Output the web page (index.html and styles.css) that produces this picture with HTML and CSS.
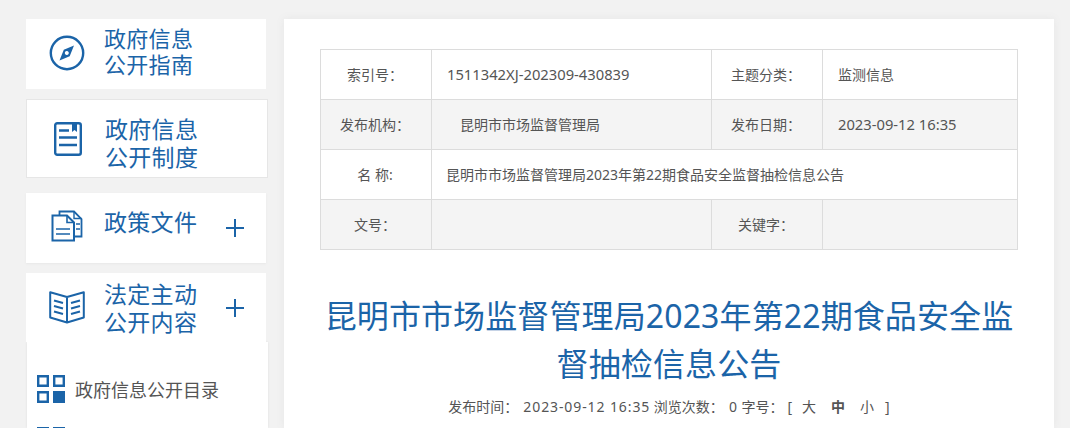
FILE: index.html
```html
<!DOCTYPE html>
<html lang="zh-CN">
<head>
<meta charset="utf-8">
<title>昆明市市场监督管理局2023年第22期食品安全监督抽检信息公告</title>
<link rel="stylesheet" href="styles.css">
</head>
<body>
<div class="page">
  <aside class="side">
    <a class="nav nav-guide">
      <svg class="ic" width="36" height="36" viewBox="0 0 36 36"><circle cx="18" cy="18" r="16.2" fill="none" stroke="#1b64a8" stroke-width="2.4"/><path fill-rule="evenodd" d="M10.500 25.500 14.800 14.800 25 10.500 20.700 21.200ZM17.800 16a2 2 0 1 0 .01 0Z" fill="#1b64a8"/></svg>
      <span class="nav-text">政府信息<br>公开指南</span>
    </a>
    <a class="nav nav-system">
      <svg class="ic" width="28" height="34" viewBox="0 0 28 34"><rect x="1.200" y="1.200" width="25.600" height="31.600" rx="2" fill="none" stroke="#1b64a8" stroke-width="2.400"/><path d="M18 1h5v9l-2.500-2-2.500 2z" fill="#1b64a8"/><path d="M5 8.500h10M5 15.500h18M5 23h18" stroke="#1b64a8" stroke-width="2.400" fill="none"/></svg>
      <span class="nav-text">政府信息<br>公开制度</span>
    </a>
    <a class="nav nav-policy">
      <svg class="ic" width="32" height="32" viewBox="0 0 32 32"><path d="M1.500 5.500H16L23 12.500V30.500H1.500Z" fill="none" stroke="#1b64a8" stroke-width="2"/><path d="M16 5.500V12.500H23" fill="none" stroke="#1b64a8" stroke-width="1.600"/><path d="M8.500 5V1.500H23L30.500 9V26.500H23" fill="none" stroke="#1b64a8" stroke-width="1.800"/><path d="M23 1.500V8.500H30.500" fill="none" stroke="#1b64a8" stroke-width="1.400"/><path d="M5 19h14M5 24h14M25 14h4M25 19h4" stroke="#1b64a8" stroke-width="1.700"/></svg>
      <span class="nav-text">政策文件</span>
      <span class="plus"></span>
    </a>
    <a class="nav nav-law">
      <svg class="ic" width="36" height="33" viewBox="0 0 36 33"><path d="M18 6 1.200 1.300V26.500L18 31.500 34.800 26.500V1.300zM18 6v25" fill="none" stroke="#1b64a8" stroke-width="2" stroke-linejoin="round"/><path d="M5 9.500l9 2.500M5 15l9 2.500M5 20.500l9 2.500M31 9.500l-9 2.500M31 15l-9 2.500M31 20.500l-9 2.500" stroke="#1b64a8" stroke-width="2"/></svg>
      <span class="nav-text">法定主动<br>公开内容</span>
      <span class="plus"></span>
    </a>
    <div class="sub">
      <div class="sub-item">
        <svg width="28" height="28" viewBox="0 0 28 28"><path d="M1.200 1.200h9.600v9.600H1.200zM17.200 1.200h9.600v9.600h-9.600zM1.200 17.200h9.600v9.600H1.200z" fill="none" stroke="#1b64a8" stroke-width="2.400"/><path d="M16 16h12v12H16z" fill="#1b64a8"/></svg>
        <span>政府信息公开目录</span>
      </div>
      <div class="sub-item">
        <svg width="28" height="28" viewBox="0 0 28 28"><path d="M1.200 1.200h9.600v9.600H1.200zM17.200 1.200h9.600v9.600h-9.600z" fill="none" stroke="#1b64a8" stroke-width="2.400"/></svg>
      </div>
    </div>
  </aside>
  <main class="card">
    <table class="meta">
      <colgroup><col class="c1"><col class="c2"><col class="c3"><col class="c4"></colgroup>
      <tr><th>索引号&#xFF1A;</th><td class="num">1511342XJ-202309-430839</td><th>主题分类&#xFF1A;</th><td>监测信息</td></tr>
      <tr class="alt"><th>发布机构&#xFF1A;</th><td class="indent">昆明市市场监督管理局</td><th>发布日期&#xFF1A;</th><td class="num">2023-09-12 16:35</td></tr>
      <tr><th>名 称:</th><td class="cn" colspan="3">昆明市市场监督管理局2023年第22期食品安全监督抽检信息公告</td></tr>
      <tr class="alt"><th>文号&#xFF1A;</th><td></td><th>关键字&#xFF1A;</th><td></td></tr>
    </table>
    <h1 class="title">昆明市市场监督管理局2023年第22期食品安全监督抽检信息公告</h1>
    <p class="info">发布时间&#xFF1A;<span class="digits">2023-09-12 16:35</span> 浏览次数&#xFF1A;<span class="digits">0</span> 字号&#xFF1A;<span class="br">[</span><span class="sz">大</span><b class="sz">中</b><span class="sz">小</span><span class="br-end">]</span></p>
  </main>
</div>
</body>
</html>
```

FILE: styles.css
```css
* { box-sizing: border-box; }
html, body { margin: 0; height: 428px; overflow: hidden; }
body { background: #f2f2f2; font-family: "Noto Sans", "Noto Sans CJK SC", sans-serif; color: #555; }
.page { display: flex; align-items: flex-start; padding: 19px 0 0 26px; gap: 18px; height: 428px; overflow: hidden; }
.side { width: 240px; flex: none; display: flex; flex-direction: column; }
.nav { display: flex; align-items: center; background: #fff; color: #1b64a8; font-size: 23px; line-height: 28px; letter-spacing: .3px; position: relative; white-space: nowrap; }
.nav-text { display: block; }
.ic { flex: none; }
.nav-guide { height: 70px; padding: 0 0 2px 23px; margin-bottom: 10px; font-size: 22px; line-height: 26px; }
.nav-guide .nav-text { margin: -4px 0 0 19px; }
.nav-system { height: 79px; width: 242px; border: 1px solid #e6e6e6; padding: 0 0 0 27px; margin-bottom: 15px; }
.nav-system .nav-text { margin: 8px 0 0 23px; }
.nav-policy { height: 70px; padding: 0 0 12px 25px; margin-bottom: 10px; box-shadow: 0 1px 2px #e8e8e8; }
.nav-policy .ic { margin-top: 7px; }
.nav-policy .nav-text { margin-left: 21px; }
.nav-law { height: 69px; padding: 0 0 0 23px; }
.nav-law .nav-text { margin-left: 19px; }
.plus { position: absolute; left: 200px; top: 50%; width: 18px; height: 18px; margin-top: -9px;
  background: linear-gradient(#1b64a8,#1b64a8) center/18px 2px no-repeat, linear-gradient(#1b64a8,#1b64a8) center/2px 18px no-repeat; }
.nav-policy .plus { top: 26px; margin-top: 0; }
.sub { width: 241px; margin-left: 1px; height: 86px; background: #fff; box-shadow: 0 0 2px #ddd; padding-top: 33px; overflow: hidden; }
.sub-item { display: flex; align-items: center; gap: 10px; padding-left: 10px; height: 28px; margin-bottom: 24px; font-size: 18px; color: #555; white-space: nowrap; }
.sub-item svg { flex: none; }
.card { width: 770px; height: 409px; background: #fff; padding: 30px 36px 0; box-shadow: 0 0 8px #e6e6e6; flex: none; }
.meta { width: 697px; border-collapse: collapse; table-layout: fixed; font-size: 14px; color: #555; }
.c1 { width: 111px; } .c2 { width: 280px; } .c3 { width: 111px; } .c4 { width: 195px; }
.meta th, .meta td { height: 50px; border: 1px solid #dcdcdc; padding: 0 0 2px; font-weight: normal; }
.meta th { text-align: center; padding-right: 2px; }
.meta td { padding-left: 15px; }
.meta td.indent { padding-left: 28px; }
.meta td.cn { padding-left: 14px; }
.meta td.num { font-size: 14.75px; }
.alt th, .alt td { background: #f4f4f4; }
.title { margin: 42px 0 0; font-size: 32px; line-height: 48px; font-weight: normal; letter-spacing: .12px; color: #1b64a8; text-align: center; }
.info { margin: 9px 0 0; font-size: 14px; line-height: 20px; text-align: center; color: #555; white-space: nowrap; }
.digits { letter-spacing: .9px; margin-left: 5px; }
.sz { margin-right: 15px; }
.br { margin: 0 10px 0 4px; }
.br-end { margin-left: -4px; }
```
